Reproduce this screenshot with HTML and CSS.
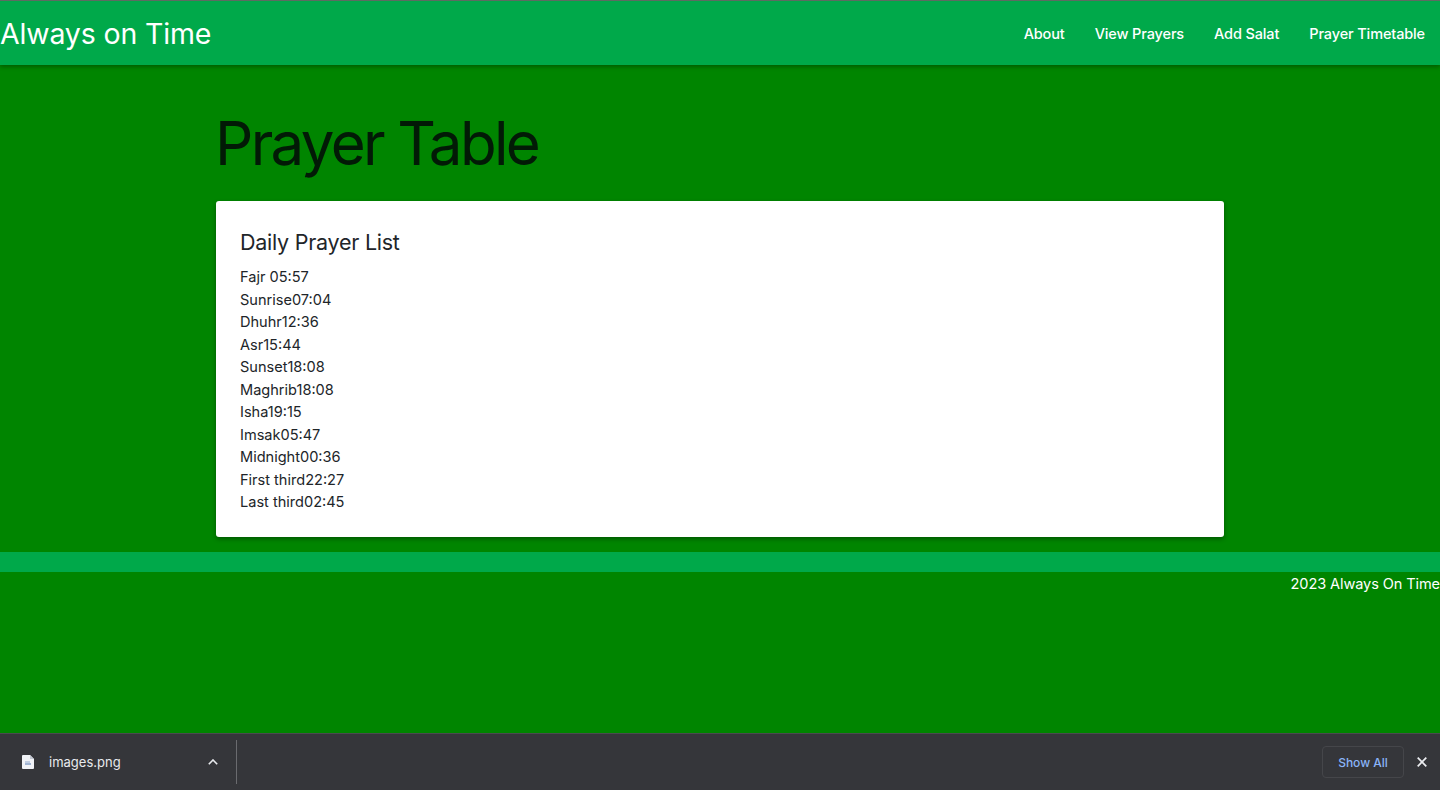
FILE: index.html
```html
<!DOCTYPE html>
<html lang="en">
<head>
  <meta charset="UTF-8">
  <title>Always on Time</title>
  <link rel="stylesheet" href="styles.css">
</head>
<body>

  <div class="page">
    <nav class="navbar">
      <a class="brand" href="#">Always on Time</a>
      <ul class="nav-links">
        <li><a href="#">About</a></li>
        <li><a href="#">View Prayers</a></li>
        <li><a href="#">Add Salat</a></li>
        <li><a href="#">Prayer Timetable</a></li>
      </ul>
    </nav>

    <main class="content">
      <h1 class="title">Prayer Table</h1>
      <div class="card">
        <h2 class="card-title">Daily Prayer List</h2>
        <ul class="prayers">
          <li>Fajr 05:57</li>
          <li>Sunrise07:04</li>
          <li>Dhuhr12:36</li>
          <li>Asr15:44</li>
          <li>Sunset18:08</li>
          <li>Maghrib18:08</li>
          <li>Isha19:15</li>
          <li>Imsak05:47</li>
          <li>Midnight00:36</li>
          <li>First third22:27</li>
          <li>Last third02:45</li>
        </ul>
      </div>
    </main>

    <div class="footer-bar"></div>
    <footer class="footer">2023 Always On Time</footer>
  </div>

  <div class="download-bar">
    <div class="download-item">
      <svg class="file-icon" width="12" height="14" viewBox="0 0 12 14">
        <path d="M1 0h7l4 4v9a1 1 0 0 1-1 1H1a1 1 0 0 1-1-1V1a1 1 0 0 1 1-1z" fill="#f1f3f7"/>
        <path d="M8 0l4 4H8z" fill="#c3c8d2"/>
        <path d="M3 6.5h5v1H3z" fill="#8ea6cc"/>
        <path d="M3 8.5h6v1H3z" fill="#4f74ad"/>
      </svg>
      <span class="file-name">images.png</span>
      <svg class="chevron" width="10" height="6" viewBox="0 0 10 6">
        <path d="M.8 5.2L5 1l4.2 4.2" fill="none" stroke="#e8eaed" stroke-width="1.6"/>
      </svg>
    </div>
    <button class="show-all">Show All</button>
    <svg class="close" width="10" height="10" viewBox="0 0 10 10">
      <path d="M.7.7l8.6 8.6M9.3.7L.7 9.3" fill="none" stroke="#eceef1" stroke-width="1.7"/>
    </svg>
  </div>

</body>
</html>
```

FILE: styles.css
```css
* {
  box-sizing: border-box;
}

body {
  margin: 0;
  height: 790px;
  display: flex;
  flex-direction: column;
  overflow: hidden;
  font-family: Inter, "Liberation Sans", sans-serif;
  font-size: 14.55px;
  color: #212529;
  background-color: #008500;
}

a {
  color: inherit;
  text-decoration: none;
}

.page {
  flex: 1;
}

.navbar {
  height: 65px;
  display: flex;
  align-items: center;
  justify-content: space-between;
  padding-right: 15px;
  color: #fff;
  background-color: #00a94a;
  border-top: 1px solid #5d6b62;
  box-shadow: 0 2px 4px rgba(0, 0, 0, 0.3);
}

.brand {
  font-size: 28.5px;
  letter-spacing: -0.15px;
}

.nav-links {
  display: flex;
  gap: 30px;
  margin: 0;
  padding: 0;
  list-style: none;
  font-size: 14.5px;
  font-weight: 450;
  letter-spacing: -0.13px;
}

.content {
  width: 1008px;
  margin: 0 auto;
  padding-top: 38px;
}

.title {
  margin: 0 0 18px -1px;
  font-size: 60px;
  line-height: 80px;
  font-weight: 400;
  letter-spacing: -2.65px;
  color: #021a06;
}

.card {
  padding: 25px 24px 23px;
  background: #fff;
  border-radius: 3px;
  box-shadow: 0 2px 4px rgba(0, 0, 0, 0.35);
}

.card-title {
  margin: 0 0 8px;
  font-size: 21.5px;
  line-height: 32px;
  font-weight: 400;
  letter-spacing: -0.25px;
}

.prayers {
  margin: 0;
  padding: 0;
  list-style: none;
  line-height: 22.5px;
}

.footer-bar {
  height: 20px;
  margin-top: 15px;
  background-color: #00a94a;
}

.footer {
  height: 24px;
  line-height: 24px;
  text-align: right;
  letter-spacing: -0.1px;
  color: #fff;
}

.download-bar {
  height: 57px;
  display: flex;
  align-items: center;
  color: #e8eaed;
  background-color: #35363a;
  border-top: 1px solid #4a4b4f;
}

.download-item {
  width: 237px;
  height: 44px;
  display: flex;
  align-items: center;
  padding: 0 18px 0 22px;
  border-right: 1px solid #6a6b6f;
}

.file-name {
  flex: 1;
  margin-left: 15px;
  font-size: 13px;
}

.show-all {
  width: 82px;
  height: 32px;
  margin-left: auto;
  padding: 0;
  font-family: inherit;
  font-size: 12px;
  font-weight: 500;
  color: #8ab4f8;
  background: none;
  border: 1px solid #45464a;
  border-radius: 4px;
}

.close {
  margin: 0 13px;
}
```
